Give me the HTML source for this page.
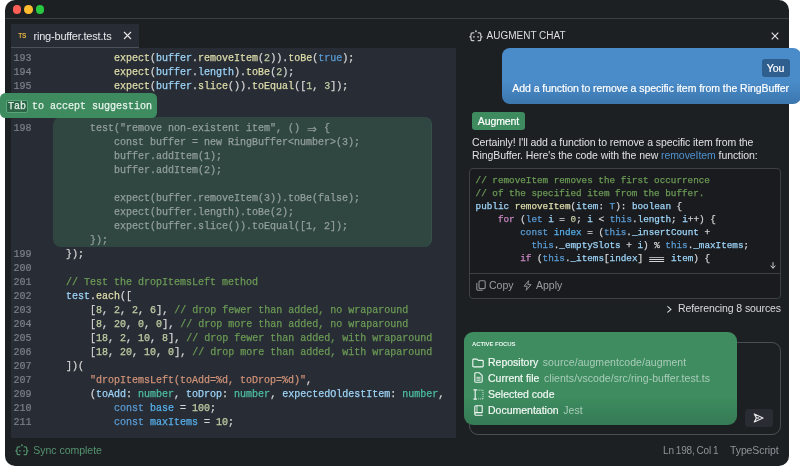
<!DOCTYPE html>
<html lang="en">
<head>
<meta charset="utf-8">
<title>Augment</title>
<style>
*{box-sizing:border-box;margin:0;padding:0}
html,body{width:800px;height:467px;overflow:hidden;background:#fff}
body{position:relative;font-family:"Liberation Sans",sans-serif;color:#d4d4d4}
i{font-style:normal}
u{text-decoration:none;display:inline-block;text-align:center}
u.lg{-webkit-text-stroke:0;font-family:"DejaVu Sans Mono","Liberation Mono",monospace;vertical-align:top}
#root{position:absolute;left:0;top:0;width:800px;height:467px;overflow:hidden;will-change:transform;opacity:.999}
.abs,.abs>*{position:absolute}
#win{position:absolute;left:5px;top:0;width:784.3px;height:466px;border-radius:10px;background:#1d2023}
#tbar{position:absolute;left:5px;top:18px;width:784px;height:1px;background:#3b3e43}
.lt{position:absolute;top:5.1px;width:8.6px;height:8.6px;border-radius:50%}
#ed{position:absolute;left:11px;top:48px;width:445px;height:390px;background:#282c34}
#tab{position:absolute;left:11px;top:24px;width:128px;height:24px;background:#282c34;border-bottom:1px solid #4d5159}
#tab .ts{position:absolute;left:7.3px;top:8.1px;font-size:6.5px;font-weight:bold;color:#e0b040;letter-spacing:-0.2px}
#tab .nm{position:absolute;left:22.5px;top:5.5px;font-size:11px;color:#e6e8eb;letter-spacing:-0.2px;white-space:pre}
.ln{-webkit-text-stroke:.2px;position:absolute;left:13.5px;color:#7b808a;font-family:"Liberation Mono",monospace;font-size:10px;line-height:14px;white-space:pre}
.cl{-webkit-text-stroke:.25px;position:absolute;left:42px;font-family:"Liberation Mono",monospace;font-size:10px;line-height:14px;white-space:pre;color:#d4d4d4}
.cc{-webkit-text-stroke:.25px;position:absolute;left:475.6px;font-family:"Liberation Mono",monospace;font-size:9.3px;line-height:13px;white-space:pre;color:#d4d4d4}
.y{color:#dcdcaa}.b{color:#9cd3f6}.k{color:#5a9bd3}.n{color:#c0cda4}.c{color:#6a9955}.s{color:#ce9178}.t{color:#4dbea2}.v{color:#55aee8}.k2{color:#5a9bd3}.p{color:#c586c0}
#sug{position:absolute;left:53px;top:117px;width:379px;height:130px;border-radius:8px;background:#2f4641;box-shadow:inset -1px 0 0 #36504a}
.g{color:#939f9b}
#tip{position:absolute;left:0;top:93px;width:157px;height:25px;border-radius:5.5px;background:#3d8b5f}
#tip .kb{position:absolute;left:6px;top:7px;width:22px;height:13px;border-radius:2px;background:#2b6646;border:1px solid #5da47c}
#tip .tx{-webkit-text-stroke:.25px;position:absolute;left:8px;top:7px;font-family:"Liberation Mono",monospace;font-size:10px;line-height:14px;color:#e6f2ea;white-space:pre}
.st{position:absolute;top:443.6px;font-size:10.5px;line-height:13px;white-space:pre;letter-spacing:-0.1px}
#hdr{position:absolute;left:486.5px;top:29px;font-size:10px;line-height:13px;color:#dcdee1;white-space:pre;letter-spacing:0}
#bub{position:absolute;left:502px;top:47.5px;width:298.5px;height:56px;border-radius:8px;background:linear-gradient(#4a8cc9 0,#4a8cc9 60%,#3c76ae 100%)}
#you{-webkit-text-stroke:.2px;position:absolute;left:761.5px;top:58.5px;width:28px;height:18px;border-radius:3px;background:#2f5f8f;color:#fff;font-size:10.5px;line-height:18px;text-align:center}
#msg{-webkit-text-stroke:.2px;position:absolute;right:11px;top:82px;font-size:10.5px;line-height:13px;color:#fff;white-space:pre;letter-spacing:-0.055px}
#aug{-webkit-text-stroke:.2px;position:absolute;left:472px;top:112px;width:53px;height:18px;border-radius:3px;background:#3d8b5f;color:#fff;font-size:10.5px;line-height:18px;text-align:center;letter-spacing:-0.1px}
.rt{position:absolute;left:472px;font-size:10.5px;line-height:13px;color:#dfe1e4;white-space:pre;letter-spacing:-0.075px}
.rt b{font-weight:normal;color:#4f92d2}
#cb{position:absolute;left:469px;top:167.5px;width:312.3px;height:131.3px;border-radius:4px;border:1px solid #3d4045;background:#1a1b1e}
#cbsep{position:absolute;left:470px;top:272.6px;width:310px;height:1px;background:#3d4045}
.ft{position:absolute;top:279px;font-size:10.5px;line-height:13px;color:#9a9da3;white-space:pre}
#ref{position:absolute;right:19px;top:302px;font-size:10.5px;line-height:13px;color:#d9dbde;white-space:pre;letter-spacing:-0.1px}
#inp{position:absolute;left:469px;top:342px;width:312px;height:93px;border-radius:9px;border:1px solid #4a4d52}
#send{position:absolute;left:745px;top:409px;width:27.6px;height:18px;border-radius:3px;background:#2a2c33}
#foc{position:absolute;left:464px;top:332px;width:273px;height:93px;border-radius:9px;background:linear-gradient(#3e8c60 0,#3e8c60 70%,#357a54 100%)}
#af{position:absolute;left:472px;top:340px;font-size:6px;line-height:8px;font-weight:bold;color:#eaf4ee;white-space:pre;letter-spacing:-0.1px}
.fr{position:absolute;left:488px;font-size:10.5px;line-height:13px;color:#f2f8f4;white-space:pre;letter-spacing:0}
.fr b{font-weight:normal;-webkit-text-stroke:.2px}
.fr i{color:#a9cdb8;letter-spacing:.06px;margin-left:1.7px}
</style>
</head>
<body>
<div id="root">
<div id="win"></div>
<div id="tbar"></div>
<div class="lt" style="left:12.8px;background:#fe5f57"></div>
<div class="lt" style="left:24.4px;background:#febc2e"></div>
<div class="lt" style="left:35.7px;background:#28c840"></div>
<div id="tab"><span class="ts">TS</span><span class="nm">ring-buffer.test.ts</span>
<svg style="position:absolute;left:112px;top:7px" width="9" height="9" viewBox="0 0 9 9"><path d="M1 1L8 8M8 1L1 8" stroke="#e6e6e6" stroke-width="1.1" fill="none"/></svg>
</div>
<div id="ed"></div>
<div id="sug"></div>
<div class="ln" style="top:52px">193</div>
<div class="cl" style="top:52px">            <i class="y">expect</i>(<i class="b">buffer</i>.<i class="y">removeItem</i>(<i class="n">2</i>)).<i class="y">toBe</i>(<i class="k">true</i>);</div>
<div class="ln" style="top:66px">194</div>
<div class="cl" style="top:66px">            <i class="y">expect</i>(<i class="b">buffer</i>.<i class="b">length</i>).<i class="y">toBe</i>(<i class="n">2</i>);</div>
<div class="ln" style="top:80px">195</div>
<div class="cl" style="top:80px">            <i class="y">expect</i>(<i class="b">buffer</i>.<i class="y">slice</i>()).<i class="y">toEqual</i>([<i class="n">1</i>, <i class="n">3</i>]);</div>
<div class="ln" style="top:122px">198</div>
<div class="cl" style="top:122px"><span class="g">        test("remove non-existent item", () <u class="lg" style="width:12px"><u style="transform:scale(1.65,1.7)">⇒</u></u> {</span></div>
<div class="cl" style="top:136px"><span class="g">            const buffer = new RingBuffer&lt;number&gt;(3);</span></div>
<div class="cl" style="top:150px"><span class="g">            buffer.addItem(1);</span></div>
<div class="cl" style="top:164px"><span class="g">            buffer.addItem(2);</span></div>
<div class="cl" style="top:192px"><span class="g">            expect(buffer.removeItem(3)).toBe(false);</span></div>
<div class="cl" style="top:206px"><span class="g">            expect(buffer.length).toBe(2);</span></div>
<div class="cl" style="top:220px"><span class="g">            expect(buffer.slice()).toEqual([1, 2]);</span></div>
<div class="cl" style="top:234px"><span class="g">        });</span></div>
<div class="ln" style="top:248px">199</div>
<div class="cl" style="top:248px">    });</div>
<div class="ln" style="top:262px">200</div>
<div class="ln" style="top:276px">201</div>
<div class="cl" style="top:276px">    <i class="c">// Test the dropItemsLeft method</i></div>
<div class="ln" style="top:290px">202</div>
<div class="cl" style="top:290px">    <i class="b">test</i>.<i class="y">each</i>([</div>
<div class="ln" style="top:304px">203</div>
<div class="cl" style="top:304px">        [<i class="n">8</i>, <i class="n">2</i>, <i class="n">2</i>, <i class="n">6</i>], <i class="c">// drop fewer than added, no wraparound</i></div>
<div class="ln" style="top:318px">204</div>
<div class="cl" style="top:318px">        [<i class="n">8</i>, <i class="n">20</i>, <i class="n">0</i>, <i class="n">0</i>], <i class="c">// drop more than added, no wraparound</i></div>
<div class="ln" style="top:332px">205</div>
<div class="cl" style="top:332px">        [<i class="n">18</i>, <i class="n">2</i>, <i class="n">10</i>, <i class="n">8</i>], <i class="c">// drop fewer than added, with wraparound</i></div>
<div class="ln" style="top:346px">206</div>
<div class="cl" style="top:346px">        [<i class="n">18</i>, <i class="n">20</i>, <i class="n">10</i>, <i class="n">0</i>], <i class="c">// drop more than added, with wraparound</i></div>
<div class="ln" style="top:360px">207</div>
<div class="cl" style="top:360px">    ])(</div>
<div class="ln" style="top:374px">207</div>
<div class="cl" style="top:374px">        <i class="s">"dropItemsLeft(toAdd=%d, toDrop=%d)"</i>,</div>
<div class="ln" style="top:388px">209</div>
<div class="cl" style="top:388px">        (<i class="b">toAdd</i>: <i class="t">number</i>, <i class="b">toDrop</i>: <i class="t">number</i>, <i class="b">expectedOldestItem</i>: <i class="t">number</i>,</div>
<div class="ln" style="top:402px">210</div>
<div class="cl" style="top:402px">            <i class="k">const</i> <i class="v">base</i> = <i class="n">100</i>;</div>
<div class="ln" style="top:416px">211</div>
<div class="cl" style="top:416px">            <i class="k">const</i> <i class="v">maxItems</i> = <i class="n">10</i>;</div>
<div id="tip"><div class="kb"></div><div class="tx">Tab to accept suggestion</div></div>

<!-- status bar -->
<svg style="position:absolute;left:15.1px;top:443.7px" width="14" height="12" viewBox="0 0 14 12" fill="none" stroke="#4f8f6c" stroke-width="1.25" stroke-linecap="round" stroke-linejoin="round"><path d="M4.8 2.8H3.4Q2.05 2.8 2.05 4.1V5.5Q2.05 6.6 .8 6.8Q2.05 7 2.05 8.1V9.4Q2.05 10.7 3.4 10.7H4.8"/><path d="M9.2 2.8H10.4Q11.7 2.8 11.7 4.1V5.5Q11.7 6.6 13 6.8Q11.7 7 11.7 8.1V9.4Q11.7 10.7 10.4 10.7H9.2"/><circle cx="6.9" cy="1.3" r=".35" fill="#4f8f6c"/><circle cx="4.9" cy="6.8" r=".3" fill="#4f8f6c"/><circle cx="9.1" cy="6.8" r=".3" fill="#4f8f6c"/></svg>
<div class="st" style="left:33.3px;color:#54936f;letter-spacing:-.02px">Sync complete</div>
<div class="st" style="left:663px;color:#8f9297;font-size:10px;letter-spacing:-.15px;word-spacing:-.7px">Ln 198, Col 1</div>
<div class="st" style="left:730px;color:#8f9297">TypeScript</div>

<!-- chat -->
<svg style="position:absolute;left:468.5px;top:29.9px" width="14" height="12" viewBox="0 0 14 12" fill="none" stroke="#c4c6ca" stroke-width="1.25" stroke-linecap="round" stroke-linejoin="round"><path d="M4.8 2.8H3.4Q2.05 2.8 2.05 4.1V5.5Q2.05 6.6 .8 6.8Q2.05 7 2.05 8.1V9.4Q2.05 10.7 3.4 10.7H4.8"/><path d="M9.2 2.8H10.4Q11.7 2.8 11.7 4.1V5.5Q11.7 6.6 13 6.8Q11.7 7 11.7 8.1V9.4Q11.7 10.7 10.4 10.7H9.2"/><circle cx="6.9" cy="1.3" r=".35" fill="#c4c6ca"/><circle cx="4.9" cy="6.8" r=".3" fill="#c4c6ca"/><circle cx="9.1" cy="6.8" r=".3" fill="#c4c6ca"/></svg>
<div id="hdr">AUGMENT CHAT</div>
<svg style="position:absolute;left:771px;top:32px" width="8" height="8" viewBox="0 0 8 8"><path d="M0.7 0.7L7.3 7.3M7.3 0.7L0.7 7.3" stroke="#e6e6e6" stroke-width="1.1" fill="none"/></svg>
<div id="bub"></div>
<div id="you">You</div>
<div id="msg">Add a function to remove a specific item from the RingBuffer</div>
<div id="aug">Augment</div>
<div class="rt" style="top:136px">Certainly! I'll add a function to remove a specific item from the</div>
<div class="rt" style="top:149px">RingBuffer. Here's the code with the new <b>removeItem</b> function:</div>
<div id="cb"></div>
<div id="cbsep"></div>
<svg style="position:absolute;left:770px;top:262px" width="6" height="7" viewBox="0 0 6 7" fill="none" stroke="#c9cbcf" stroke-width="1" stroke-linecap="round" stroke-linejoin="round"><path d="M3 .6V6M.8 3.9L3 6.2L5.2 3.9"/></svg>
<div class="cc" style="top:174px"><i class="c">// removeItem removes the first occurrence</i></div>
<div class="cc" style="top:187px"><i class="c">// of the specified item from the buffer.</i></div>
<div class="cc" style="top:200px"><i class="b">public</i> <i class="y">removeItem</i>(<i class="b">item</i>: <i class="k">T</i>): <i class="b">boolean</i> {</div>
<div class="cc" style="top:213px">    <i class="p">for</i> (<i class="k2">let</i> <i class="b">i</i> = <i class="n">0</i>; <i class="b">i</i> &lt; <i class="k2">this</i>.<i class="b">length</i>; <i class="b">i</i>++) {</div>
<div class="cc" style="top:226px">        <i class="k2">const</i> <i class="v">index</i> = (<i class="k2">this</i>.<i class="b">_insertCount</i> +</div>
<div class="cc" style="top:239px">          <i class="k2">this</i>.<i class="b">_emptySlots</i> + <i class="b">i</i>) % <i class="k2">this</i>.<i class="b">_maxItems</i>;</div>
<div class="cc" style="top:252px">        <i class="p">if</i> (<i class="k2">this</i>.<i class="b">_items</i>[<i class="b">index</i>] <u class="lg" style="width:16.74px"><u style="transform:scale(3.1,1.15)">≡</u></u> <i class="b">item</i>) {</div>
<svg style="position:absolute;left:475.5px;top:280.4px" width="10" height="11" viewBox="0 0 10 11" fill="none" stroke="#8e9196" stroke-width="1.1" stroke-linecap="round" stroke-linejoin="round"><rect x="3" y=".8" width="6.2" height="7.8" rx="1.3"/><path d="M.8 3.2V8.9Q.8 10.2 2.1 10.2H6.3"/></svg>
<svg style="position:absolute;left:523px;top:280.4px" width="9" height="11" viewBox="0 0 9 11" fill="none" stroke="#8e9196" stroke-width="1" stroke-linejoin="round"><path d="M5.6 .7L1 6.2H4.2L3.2 10.3L8 4.6H4.8Z"/></svg>
<div class="ft" style="left:489px">Copy</div>
<div class="ft" style="left:536px">Apply</div>
<svg style="position:absolute;left:667px;top:305.5px" width="5" height="7" viewBox="0 0 5 7" fill="none" stroke="#d9dbde" stroke-width="1.1" stroke-linecap="round" stroke-linejoin="round"><path d="M.8 .7L4 3.4L.8 6.2"/></svg>
<div id="ref">Referencing 8 sources</div>
<div id="inp"></div>
<div id="send"></div>
<svg style="position:absolute;left:753px;top:413px" width="11" height="10" viewBox="0 0 11 10" fill="none" stroke="#e8e9eb" stroke-width="1.2" stroke-linejoin="round"><path d="M1.3 1L10 5L1.3 9L3.4 5Z"/><path d="M3.4 5H6.2"/></svg>
<div id="foc"></div>
<svg style="position:absolute;left:472px;top:357.5px" width="12" height="10" viewBox="0 0 12 10" fill="none" stroke="#f2f8f4" stroke-width="1.1" stroke-linejoin="round"><path d="M.8 2V8Q.8 8.9 1.7 8.9H10.3Q11.2 8.9 11.2 8V3.3Q11.2 2.4 10.3 2.4H6.2L4.9 1.1H1.7Q.8 1.1 .8 2Z"/></svg>
<svg style="position:absolute;left:473.5px;top:372px" width="9" height="11" viewBox="0 0 9 11" fill="none" stroke="#f2f8f4" stroke-width="1.1" stroke-linejoin="round" stroke-linecap="round"><path d="M1.7 .8H5.4L8.2 3.6V9.3Q8.2 10.2 7.3 10.2H1.7Q.8 10.2 .8 9.3V1.7Q.8 .8 1.7 .8Z"/><path d="M2.8 5.3H6.2M2.8 6.8H6.2M2.8 8.3H6.2" stroke-width=".8"/></svg>
<svg style="position:absolute;left:472.5px;top:389px" width="11" height="11" viewBox="0 0 11 11" fill="none" stroke="#f2f8f4" stroke-width="1.1"><path d="M.5 .9H3.9M.5 10.1H3.9M2.2 .9V10.1"/><path d="M4.5 1.1H10M10 1.1V9.9M10 9.9H4.5" stroke-width=".8" stroke-dasharray="1 .9"/></svg>
<svg style="position:absolute;left:473.5px;top:405px" width="9" height="11" viewBox="0 0 9 11" fill="none" stroke="#f2f8f4" stroke-width="1.1" stroke-linejoin="round" stroke-linecap="round"><path d="M.8 8.9V2Q.8 .8 2 .8H8.2V7.6H2.1Q.8 7.6 .8 8.9Q.8 10.2 2.1 10.2H8.2"/><path d="M3 .8V7.4" stroke-width=".8"/></svg>
<div id="af">ACTIVE FOCUS</div>
<div class="fr" style="top:356px"><b>Repository</b> <i>source/augmentcode/augment</i></div>
<div class="fr" style="top:372px"><b>Current file</b> <i>clients/vscode/src/ring-buffer.test.ts</i></div>
<div class="fr" style="top:388px"><b>Selected code</b></div>
<div class="fr" style="top:404px"><b>Documentation</b> <i>Jest</i></div>
</div>
</body>
</html>
